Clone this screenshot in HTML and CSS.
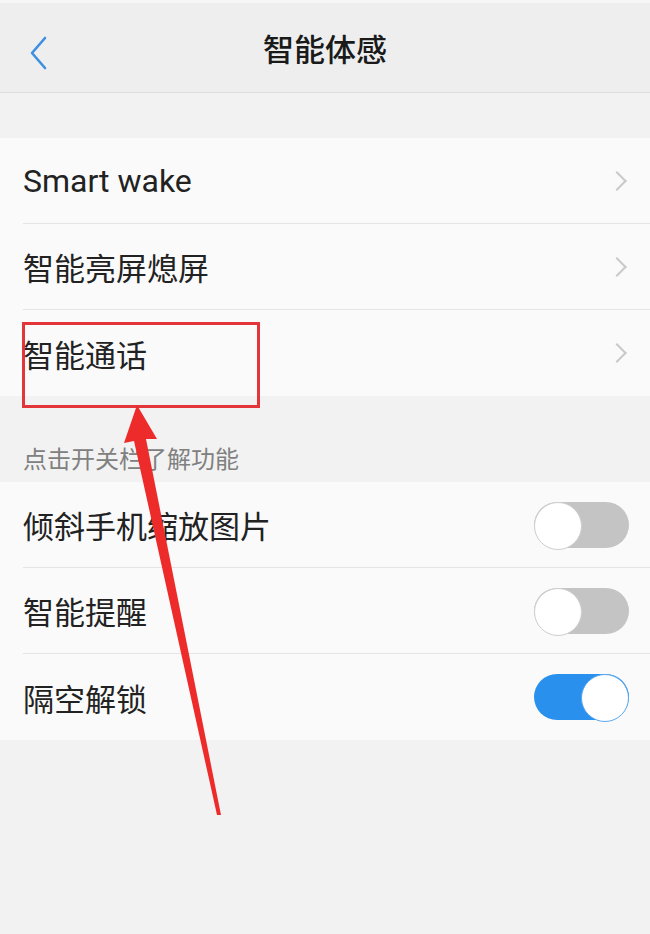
FILE: index.html
```html
<!DOCTYPE html>
<html lang="zh">
<head>
<meta charset="utf-8">
<title>智能体感</title>
<link rel="stylesheet" href="styles.css">
</head>
<body>
<div class="screen">
  <header class="topbar">
    <svg class="back" width="20" height="34" viewBox="0 0 20 34"><path d="M16 2 L3 17 L16 32" fill="none" stroke="#3d8fe0" stroke-width="2.6" stroke-linecap="round" stroke-linejoin="round"/></svg>
    <h1 class="title">智能体感</h1>
  </header>
  <div class="gap"></div>
  <section class="group">
    <div class="row"><span class="label latin">Smart wake</span><span class="chev"></span></div>
    <div class="row"><span class="label">智能亮屏熄屏</span><span class="chev"></span></div>
    <div class="row last"><span class="label">智能通话</span><span class="chev"></span></div>
  </section>
  <div class="caption">点击开关栏了解功能</div>
  <section class="group">
    <div class="row"><span class="label">倾斜手机缩放图片</span><span class="switch"></span></div>
    <div class="row"><span class="label">智能提醒</span><span class="switch"></span></div>
    <div class="row last"><span class="label">隔空解锁</span><span class="switch on"></span></div>
  </section>
  <div class="highlight"></div>
  <svg class="arrow" width="650" height="934" viewBox="0 0 650 934">
    <polygon points="137,405 124,443 134,441 217,815 221,815 146,439 157,439" fill="#ee2b2b"/>
  </svg>
</div>
</body>
</html>
```
FILE: styles.css
```css
* { box-sizing: border-box; }
html, body { margin: 0; padding: 0; }
body {
  background: #f2f2f2;
  font-family: "Noto Sans CJK SC", "Noto Sans", sans-serif;
  color: #1e1e1e;
}
.screen {
  position: relative;
  width: 650px;
  height: 934px;
  overflow: hidden;
  background: #f2f2f2;
}
.topbar {
  height: 93px;
  background: #eeeeee;
  border-top: 3px solid #f6f6f6;
  border-bottom: 1px solid #dcdcdc;
  display: flex;
  align-items: center;
  justify-content: center;
  position: relative;
}
.back {
  position: absolute;
  left: 29px;
  top: 33px;
}
.title {
  margin: 0;
  font-size: 31px;
  font-weight: 500;
  color: #1a1a1a;
}
.gap { height: 45px; }
.group { background: #fafafa; }
.row {
  height: 86px;
  margin-left: 23px;
  padding-right: 22px;
  display: flex;
  align-items: center;
  justify-content: space-between;
  border-bottom: 1px solid #e4e4e4;
}
.row.last { border-bottom: none; }
.label {
  font-size: 31px;
  line-height: 1;
  color: #222222;
}
.label.latin {
  font-family: "Roboto", "Noto Sans", sans-serif;
  font-size: 32px;
}
.chev {
  width: 14px;
  height: 14px;
  border-top: 2px solid #c9c9c9;
  border-right: 2px solid #c9c9c9;
  transform: rotate(45deg);
  margin-right: 4px;
}
.caption {
  height: 86px;
  padding: 49px 0 0 23px;
  font-size: 24px;
  line-height: 26px;
  color: #808080;
}
.switch {
  position: relative;
  width: 95px;
  height: 46px;
  border-radius: 23px;
  background: #c4c4c4;
  margin-right: -1px;
}
.switch::after {
  content: "";
  position: absolute;
  left: 0;
  top: 0;
  width: 46px;
  height: 46px;
  border-radius: 50%;
  background: #ffffff;
  border: 1.5px solid #cfcfcf;
}
.switch.on { background: #2a90ee; }
.switch.on::after {
  left: auto;
  right: 0;
  border-color: #5aa7ef;
}
.highlight {
  position: absolute;
  left: 22px;
  top: 322px;
  width: 238px;
  height: 86px;
  border: 3px solid #e2363a;
}
.arrow {
  position: absolute;
  left: 0;
  top: 0;
}
```
